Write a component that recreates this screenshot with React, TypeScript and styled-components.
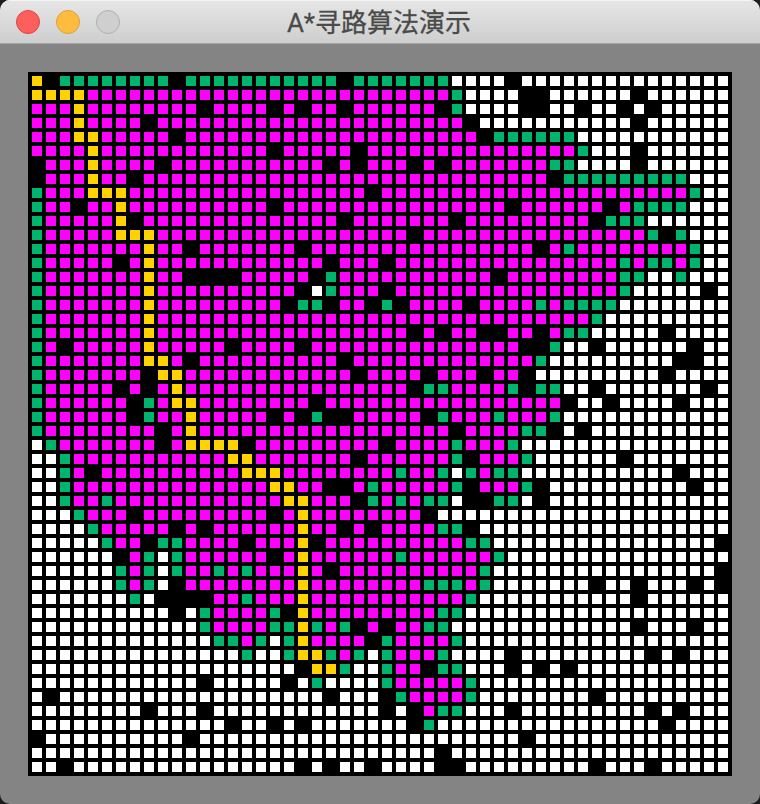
import React from 'react';
import styled, { createGlobalStyle } from 'styled-components';

const GlobalStyle = createGlobalStyle`
  * { box-sizing: border-box; }
  html, body { margin: 0; padding: 0; background: #1c1c1f; overflow: hidden; }
`;

/* y = final path, m = closed node, g = open node, . = free cell, # = wall */
const MAP = `
y#gggggggg#gggggg ggggg#ggggggg.... #...............
yyyymmmmmmmmmmmmm mmmmmmmmmmmmmg... .##......#......
mmmymmmmmmmm#mmmm #m#mm#mmmmmm#g... .##..#..#.#.....
mmmymmmm#mmmmmmmm mmmmmmmmmmmmmm#.. .........#......
mmmyymmmmm#mmmmmm mmmmmmmmmmmmmmm#g ggggg...........
mmmmymmmmmmmmmmmm #mmmmm#mmmmmmmmmm mmmmmg...#......
#mmmymmmm#mmmmmmm mmmm#m#mmm#m#mmmm mmmgg....#......
#mmmymm#mmmmmmmmm mmmmmmmmmmmmmmmmm mmm#ggggggggg...
gmmmyyymmmmmmmmmm mmmmmmm#mmmmmmmmm mmmmmmmmmmmmmg..
gmm#mmymmmmmmmmmm #mmmmmmmmmmmmmmmm #mmmmmm#mgggg...
gmmmmmy#mmmmmmmmm mmmmm#mmmmmmm#mmm mmmmmm#ggg......
gmmmmmyyymmmmmmmm mmmmmmmmmm#mmmmmm mmmmmmmmmmg#g...
gmmmmmmmymm#mmmmm mm#mmmmmmmmmmmmmm mm#mgmmmmmmmmg..
gmmmmm#mymmmmmmmm mmmm#mmm#mmmmmmmm mmmmmmmmgmggmg..
gmmmmmmmymm####mm mmm#gmmmmmmmmmmm# mmmmmmmmgg..g...
gmmmmmmmymmmmmmmm mm#.gmmm#mmmmmmmm mmmmmmmmg.....#.
gmmmmmmmymmmmmmmm m#gg#mm#g#mmmm#mm mmgmgggg........
gmmmmmmmymmmmmmmm mmmmmmmmmmmmmmmmm mmmmmmg.........
gmmmmmmmymmmmmmmm mmmmmmmmmm#m#mm## mm#mgg.....#....
gm#mmmmmymmmmm#mm mm#mmmmmmmmmmmmmm m##g..#......#..
gmmmmmmmyym#mmmmm mmmmm#mmmmmmmmmmm mmg.........##..
gmmmmmmm#yymmmmmm mmmmmm#mmmm#mmm#m m#.........#....
gmmmmm#m#mymmmmmm mmmmmmmmmm#ggmmmm g#gg..#.......#.
gmmmmmm#gmyymmmmm mmm#mmmmmmmmmmmmm mmmm#..#....#...
gmmmmmm#gmmymmmmm #m#g##mmmmm#gmmmg mmmg............
gmmmmmmmm#mymmmmm mmmmmmmmmmmmm#mmm mgg#.#..........
.gmmmmmmm#myyyy#m mmmmmmmm#mmmmgmmm g...............
..gmmmmmmmmmmmyym mmmmmm#mmmmmmg#mm mg......#.......
..gm#mmmmmmmmmmyy ymmmmmmmmgmmg.gmg g...........#...
..gmmmmmmmmmmmmmm yymm##mgmmmmmg#mm mg#..........#..
..gmmgmmmmmmmmmmm myymmm#gmgmgg.##g g.#.............
...gmmm#mmmmmmmmm #mymmmmmmmm#..... ................
....gmmmmm#m#mmmm mmymm#m#mmmmgg#.. ................
.....gmm#ggmmmm#m mmy#mmmmmmmmmmgg. ...............#
......#mg.gmmmmmm #mymmmmmmgmmmmmmg ................
......gmg.gmmgmgm mmym#mmmmmmmmmmg. ...............#
......gmg.#mmmmmm mmymmmmmmmmgggmg. ......#..#...#.#
.......g.####mmgm mmymmmmmmmmmmmg.. .........#......
..........#.gmmmm g#ymmmmmmmmmgg... ................
............gmmmm ggygmg#m#mmgg.... .........#...#..
.............ggmg .gymmmm#gmmmmg... ................
...............g. .gyygmg.gmmmg.... #.........#.#...
................. ..#yyg..gmm#gg... #.#.#...........
............#.... .#.g....gmmmmmg.. ................
.#............... ....#...#gmmmmg.. ......#.........
........#...#.... ........#.#mgg... #.........#.#...
..............#.. #.#.......#g..... ...........#....
#..........#..... ................. .#..............
................. ............#.... ................
..#.............. ..#.#..#....##... ......#...#.....
`;

const CELLS = MAP.replace(/\s/g, '').split('');

const CELL_COLORS: Record<string, string> = {
  y: '#ffd200',
  m: '#ff00ff',
  g: '#00b46e',
  '.': '#ffffff',
  '#': '#000000',
};

const Window = styled.main`
  display: flex;
  flex-direction: column;
  width: 760px;
  height: 804px;
  overflow: hidden;
  border-radius: 10px;
  background: #848484;
`;

const TitleBar = styled.header`
  display: grid;
  grid-template-columns: 1fr auto 1fr;
  align-items: center;
  flex: none;
  height: 44px;
  padding: 0 18px 0 16px;
  background: linear-gradient(#e6e6e6, #cecece);
  border-bottom: 1px solid #a6a6a6;
  box-shadow: inset 0 1px 0 #f4f4f4;
`;

const Controls = styled.div`
  display: flex;
  gap: 16px;
`;

const Light = styled.span<{ $fill: string; $ring: string }>`
  width: 24px;
  height: 24px;
  border-radius: 50%;
  border: 1px solid ${(p) => p.$ring};
  background: ${(p) => p.$fill};
`;

const Title = styled.h1`
  margin: 0;
  padding-top: 3px;
  font: 400 26px/40px Roboto, 'Noto Sans CJK SC', sans-serif;
  color: #4a4a4a;
  -webkit-text-stroke: 0.3px #4a4a4a;
  white-space: nowrap;
`;

const Stage = styled.div`
  flex: 1;
  padding: 28px;
`;

const Board = styled.div`
  display: grid;
  grid-template-columns: repeat(50, 10px);
  grid-auto-rows: 10px;
  gap: 4px;
  width: 704px;
  height: 704px;
  padding: 4px;
  background: #000;
`;

const Cell = styled.div<{ $kind: string }>`
  background: ${(p) => CELL_COLORS[p.$kind]};
`;

export default function App() {
  return (
    <>
      <GlobalStyle />
      <Window>
        <TitleBar>
          <Controls>
            <Light $fill="#fc605c" $ring="#e0443f" />
            <Light $fill="#fdbc40" $ring="#de9f34" />
            <Light $fill="#cfcfcf" $ring="#b0b0b0" />
          </Controls>
          <Title>A*寻路算法演示</Title>
        </TitleBar>
        <Stage>
          <Board>
            {CELLS.map((kind, i) => (
              <Cell key={i} $kind={kind} />
            ))}
          </Board>
        </Stage>
      </Window>
    </>
  );
}
